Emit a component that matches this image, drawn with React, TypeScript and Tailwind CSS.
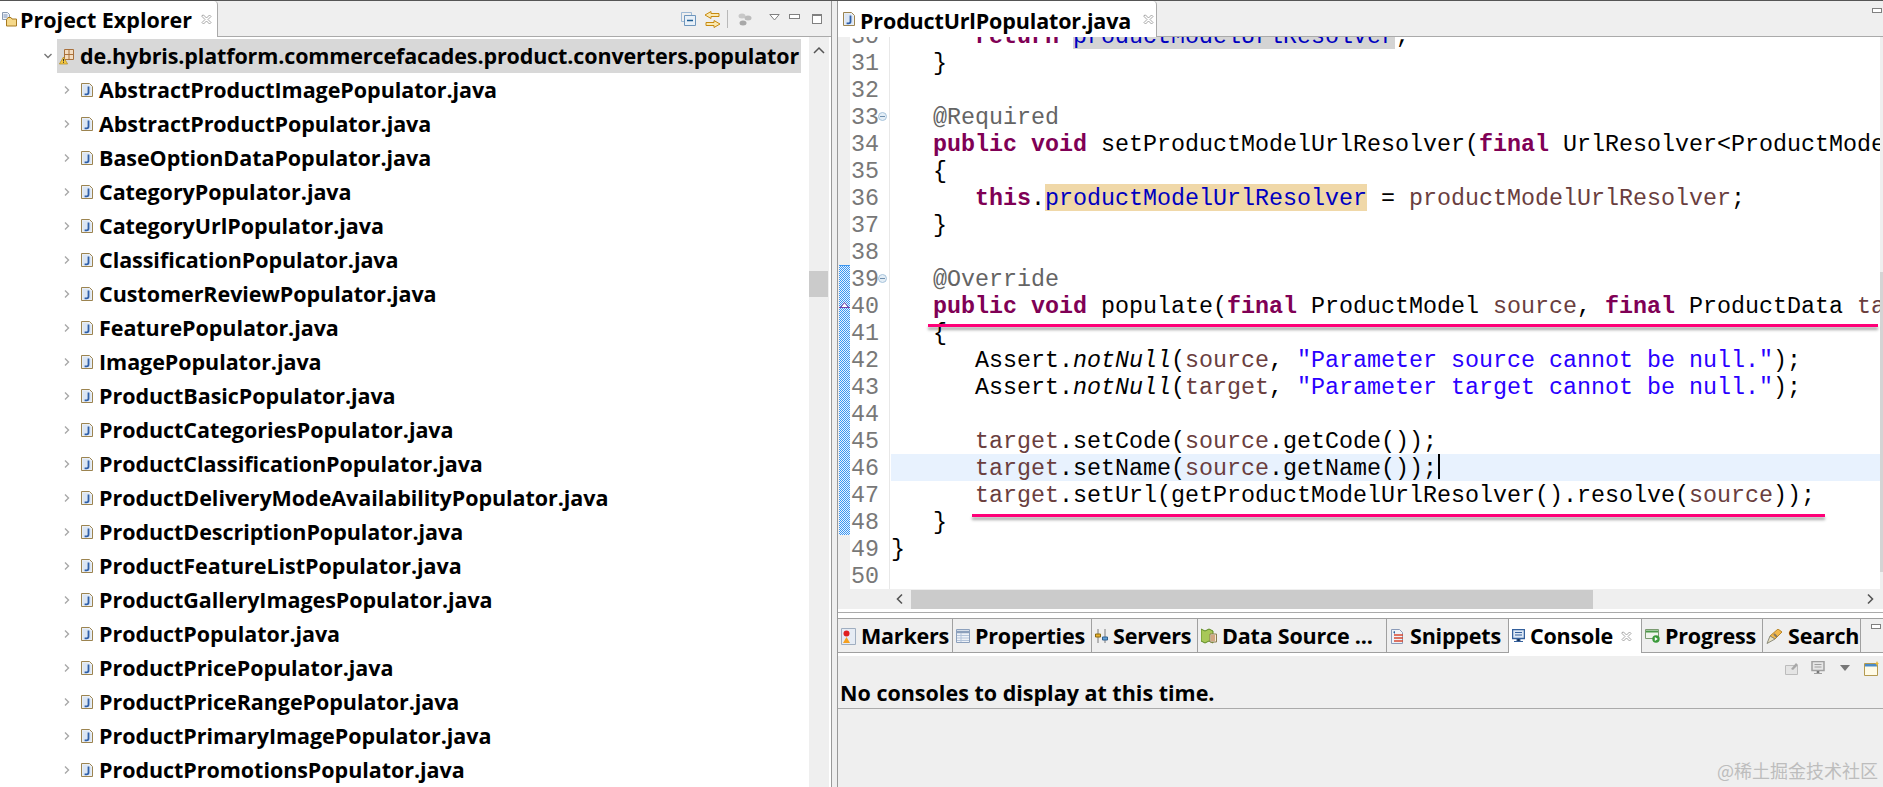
import type { ReactNode } from "react";

type Kind = "p" | "k" | "f" | "s" | "v" | "a" | "i";
type Tok = [string, Kind] | [string, Kind, string];

const files = [
  "AbstractProductImagePopulator.java",
  "AbstractProductPopulator.java",
  "BaseOptionDataPopulator.java",
  "CategoryPopulator.java",
  "CategoryUrlPopulator.java",
  "ClassificationPopulator.java",
  "CustomerReviewPopulator.java",
  "FeaturePopulator.java",
  "ImagePopulator.java",
  "ProductBasicPopulator.java",
  "ProductCategoriesPopulator.java",
  "ProductClassificationPopulator.java",
  "ProductDeliveryModeAvailabilityPopulator.java",
  "ProductDescriptionPopulator.java",
  "ProductFeatureListPopulator.java",
  "ProductGalleryImagesPopulator.java",
  "ProductPopulator.java",
  "ProductPricePopulator.java",
  "ProductPriceRangePopulator.java",
  "ProductPrimaryImagePopulator.java",
  "ProductPromotionsPopulator.java",
];

const kindClass: Record<Kind, string> = {
  p: "text-black",
  k: "text-[#7f0055] font-bold",
  f: "text-[#0000c0]",
  s: "text-[#2a00ff]",
  v: "text-[#6a3e3e]",
  a: "text-[#646464]",
  i: "text-black italic",
};

const code: Tok[][] = [
  [["      ", "p"], ["return", "k"], [" ", "p"], ["productModelUrlResolver", "f", "bg-[#d4d4d4]"], [";", "p"]],
  [["   }", "p"]],
  [],
  [["   @Required", "a"]],
  [["   ", "p"], ["public", "k"], [" ", "p"], ["void", "k"], [" setProductModelUrlResolver(", "p"], ["final", "k"], [" UrlResolver<ProductModel> ", "p"], ["productModelUrlResolver", "v"], [")", "p"]],
  [["   {", "p"]],
  [["      ", "p"], ["this", "k"], [".", "p"], ["productModelUrlResolver", "f", "bg-[#f0d8a8]"], [" = ", "p"], ["productModelUrlResolver", "v"], [";", "p"]],
  [["   }", "p"]],
  [],
  [["   @Override", "a"]],
  [["   ", "p"], ["public", "k"], [" ", "p"], ["void", "k"], [" populate(", "p"], ["final", "k"], [" ProductModel ", "p"], ["source", "v"], [", ", "p"], ["final", "k"], [" ProductData ", "p"], ["target", "v"], [")", "p"]],
  [["   {", "p"]],
  [["      Assert.", "p"], ["notNull", "i"], ["(", "p"], ["source", "v"], [", ", "p"], ["\"Parameter source cannot be null.\"", "s"], [");", "p"]],
  [["      Assert.", "p"], ["notNull", "i"], ["(", "p"], ["target", "v"], [", ", "p"], ["\"Parameter target cannot be null.\"", "s"], [");", "p"]],
  [],
  [["      ", "p"], ["target", "v"], [".setCode(", "p"], ["source", "v"], [".getCode());", "p"]],
  [["      ", "p"], ["target", "v"], [".setName(", "p"], ["source", "v"], [".getName());", "p"]],
  [["      ", "p"], ["target", "v"], [".setUrl(getProductModelUrlResolver().resolve(", "p"], ["source", "v"], ["));", "p"]],
  [["   }", "p"]],
  [["}", "p"]],
  [],
];

function JavaIcon() {
  return (
    <svg width="12" height="14" viewBox="0 0 12 14" className="shrink-0">
      <path d="M.5.5h8l3 3v10H.5z" fill="#e8eef6" stroke="#9c8450" />
      <path d="M2 2h6v2h2v8H2z" fill="#dbe6f4" />
      <path d="M7.5 3.5v6q0 1.8-1.8 1.8H3.6" fill="none" stroke="#2f5fa8" strokeWidth="1.8" />
    </svg>
  );
}

function PackageIcon() {
  return (
    <svg width="16" height="17" viewBox="0 0 16 17" className="shrink-0">
      <path d="M5.5 1.5h9v10h-9z" fill="#f3dcc0" stroke="#a8703c" />
      <path d="M10 1.5v10M5.5 6.5h9" stroke="#a8703c" />
      <path d="M4.5 9 8.6 16H.4z" fill="#f5c842" stroke="#b08a20" strokeWidth=".7" />
      <path d="M4.5 11v2.4M4.5 14.2v.8" stroke="#333" />
    </svg>
  );
}

function ProjectIcon() {
  return (
    <svg width="15" height="15" viewBox="0 0 15 15" className="shrink-0">
      <path d="M.5.5h5l2 2v5h-7z" fill="#eef2f8" stroke="#8a9ab0" />
      <path d="M1.5 3h4M1.5 5h4" stroke="#7d93b8" />
      <path d="M4.5 7.5 6 5.5h3l1 1.500h4.500v7h-10z" fill="#f6d98a" stroke="#a87a20" />
    </svg>
  );
}

function CloseIcon() {
  return (
    <svg width="11" height="11" viewBox="0 0 11 11" className="shrink-0">
      <path d="M1 1.500 2.500 1 5.500 4 8.500 1 10 2.500 7 5.500 10 8.500 8.500 10 5.500 7 2.500 10 1 8.500 4 5.500 1 2.500z" fill="#fff" stroke="#8f8f8f" strokeWidth=".8" />
    </svg>
  );
}

function Chevron({ down }: { down?: boolean }) {
  return (
    <svg width="10" height="10" viewBox="0 0 10 10" className="shrink-0">
      <path d={down ? "M1.500 3 5 6.500 8.500 3" : "M3 1.500 6.500 5 3 8.500"} fill="none" stroke={down ? "#777" : "#a8a8a8"} strokeWidth="1.400" />
    </svg>
  );
}

function MinIcon() {
  return <div className="h-[5px] w-[10px] border border-[#808080] bg-white" />;
}

function TopTools() {
  return (
    <div className="ml-auto flex items-center pr-[9px] pt-[1px]">
      <svg width="15" height="14" viewBox="0 0 15 14">
        <path d="M.5.500h10v3M.5.500v9h3" fill="none" stroke="#9db8d4" />
        <path d="M3.500 3.500h11v10h-11z" fill="#e8f0f8" stroke="#6f96bc" />
        <path d="M6 8.500h6" stroke="#1f5f94" strokeWidth="1.500" />
      </svg>
      <svg width="17" height="17" viewBox="0 0 17 17" className="ml-[8px]">
        <path d="M7 .500 1 4l6 3.500V5.500h8v-3H7zM10 9.500 16 13l-6 3.500v-2H2v-3h8z" fill="#fbe9b0" stroke="#c78a10" />
      </svg>
      <div className="ml-[6px] h-[18px] w-px bg-[#b8b8b8]" />
      <svg width="14" height="14" viewBox="0 0 14 14" className="ml-[10px]">
        <ellipse cx="4" cy="4" rx="3.500" ry="2.500" fill="#c8c8c8" />
        <ellipse cx="10" cy="6" rx="3.500" ry="2.500" fill="#bcbcbc" />
        <ellipse cx="5" cy="11" rx="3.500" ry="2.500" fill="#a8a8a8" />
      </svg>
      <svg width="11" height="7" viewBox="0 0 11 7" className="ml-[17px] mb-[4px]">
        <path d="M.8.500h9.400L5.500 6z" fill="#fff" stroke="#808080" />
      </svg>
      <div className="ml-[9px] mb-[5px] h-[5px] w-[11px] border border-[#808080] bg-white" />
      <div className="ml-[12px] mb-[1px] h-[10px] w-[10px] border border-[#808080] border-t-[2px] bg-white" />
    </div>
  );
}

function CodeLine({ n, toks }: { n: number; toks: Tok[] }) {
  const current = n === 46;
  return (
    <div className="flex h-[27px]">
      <div className="relative w-[40px] shrink-0 border-r border-[#e8e8e8] pl-[1px] text-[#787878]">
        {n}
        {(n === 33 || n === 39) && (
          <div className="absolute left-[28px] top-[9px] h-[9px] w-[9px] rounded-full border border-[#a8c4dc] bg-[#e4eef6]">
            <div className="mx-auto mt-[3px] h-px w-[5px] bg-[#6f8fae]" />
          </div>
        )}
      </div>
      <div className={`ml-[1px] grow whitespace-pre ${current ? "bg-[#e8f2fe]" : ""}`}>
        {toks.map((t, i) => (
          <span key={i} className={`inline-block h-[27px] align-top ${kindClass[t[1]]} ${t[2] ?? ""}`}>
            {t[0]}
          </span>
        ))}
        {current && <span className="ml-px inline-block h-[25px] w-[2px] bg-black align-top" />}
      </div>
    </div>
  );
}

const bottomTabs: { label: string; w: string; icon: ReactNode; active?: boolean }[] = [
  {
    label: "Markers",
    w: "w-[115px]",
    icon: (
      <svg width="15" height="17" viewBox="0 0 15 17">
        <path d="M.5.500h14v16H.5z" fill="#e6ecf4" stroke="#a0aec0" />
        <circle cx="5.500" cy="5.500" r="3" fill="#e02020" />
        <path d="M5.500 9 9 15H2z" fill="#f5a020" />
      </svg>
    ),
  },
  {
    label: "Properties",
    w: "w-[139px]",
    icon: (
      <svg width="14" height="14" viewBox="0 0 14 14">
        <path d="M.5.500h13v13H.5z" fill="#eef2f8" stroke="#8ca0bc" />
        <path d="M1 3h12" stroke="#8ca0bc" strokeWidth="2.500" />
        <path d="M1 6.500h12M1 9h12M1 11.500h12M5 4v9" stroke="#b4c4da" />
      </svg>
    ),
  },
  {
    label: "Servers",
    w: "w-[106px]",
    icon: (
      <svg width="13" height="14" viewBox="0 0 13 14">
        <path d="M3 0v14M10 0v14" stroke="#7a7a7a" />
        <path d="M.5 5h5v3h-5z" fill="#e8b030" stroke="#8a6a10" />
        <path d="M7.500 8h5v3h-5z" fill="#60a0d8" stroke="#306090" />
      </svg>
    ),
  },
  {
    label: "Data Source ...",
    w: "w-[189px]",
    icon: (
      <svg width="16" height="16" viewBox="0 0 16 16">
        <path d="M0 1l4 2 4-2 4 2v12l-4-2-4 2-4-2z" fill="#a8c858" stroke="#5c8a20" />
        <path d="M9 6h6.500v8H9z" fill="#f4ecd4" stroke="#8a7a50" />
        <path d="M10 8h4M10 10h4M10 12h4" stroke="#b06030" />
      </svg>
    ),
  },
  {
    label: "Snippets",
    w: "w-[122px]",
    icon: (
      <svg width="15" height="15" viewBox="0 0 15 15">
        <path d="M1.500.500h8l3 3v11h-11z" fill="#eef2f8" stroke="#8a9ab8" />
        <path d="M4 6h9M4 9h9M4 12h9" stroke="#d84830" strokeWidth="1.300" />
        <path d="M3 3l2-1v3z" fill="#306098" />
      </svg>
    ),
  },
  {
    label: "Console",
    w: "w-[133px]",
    active: true,
    icon: (
      <svg width="13" height="14" viewBox="0 0 13 14">
        <path d="M.5.500h12v9H.5z" fill="#dce8f6" stroke="#34609c" strokeWidth="1.500" />
        <path d="M3 3.500h7M3 6h7" stroke="#34609c" />
        <path d="M5 10h3v2H5zM2 12.500h9" stroke="#34609c" />
      </svg>
    ),
  },
  {
    label: "Progress",
    w: "w-[121px]",
    icon: (
      <svg width="15" height="14" viewBox="0 0 15 14">
        <path d="M.5.500h13v9H.5z" fill="#f0f4ec" stroke="#7a9a70" />
        <path d="M1 1.500h12v2H1z" fill="#4a9a48" />
        <circle cx="11" cy="10" r="3.700" fill="#3a9a3a" />
        <path d="M9.800 8v4l3-2z" fill="#fff" />
      </svg>
    ),
  },
  {
    label: "Search",
    w: "w-[98px]",
    icon: (
      <svg width="17" height="15" viewBox="0 0 17 15">
        <path d="M12 0l4 3-7 7-5-3z" fill="#f2b84a" stroke="#b8862a" />
        <path d="M4 7l5 3-8 4.500z" fill="#e8e0c0" stroke="#8c8c7c" />
        <path d="M8 5l3 3" stroke="#8a7a60" strokeWidth="2" />
      </svg>
    ),
  },
];

export default function App() {
  return (
    <div className="relative flex h-[787px] w-[1883px] overflow-hidden border-t border-[#555] bg-white font-['Open_Sans',sans-serif] text-black">
      {/* project explorer */}
      <div className="flex w-[831px] shrink-0 flex-col">
        <div className="flex h-[36px] shrink-0 border-b border-[#aaa] bg-[#efefef]">
          <div className="-mb-px flex h-[36px] w-[218px] shrink-0 items-center rounded-tr border-r border-[#aaa] bg-white pl-[2px]">
            <ProjectIcon />
            <span className="ml-[3px] pt-[2px] text-[21.5px] font-bold leading-none">Project Explorer</span>
            <span className="ml-[9px]"><CloseIcon /></span>
          </div>
          <TopTools />
        </div>
        <div className="flex min-h-0 grow">
          <div className="w-[809px] shrink-0 pt-[2px]">
            <div className="flex h-[34px] items-center">
              <div className="ml-[43px] w-[14px]"><Chevron down /></div>
              <div className="flex h-[34px] w-[744px] items-center bg-[#d8d8d8] pl-[2px]">
                <PackageIcon />
                <span className="ml-[5px] text-[21.5px] font-bold tracking-[-0.13px]">de.hybris.platform.commercefacades.product.converters.populator</span>
              </div>
            </div>
            {files.map((f) => (
              <div key={f} className="flex h-[34px] items-center pl-[62px]">
                <div className="w-[19px]"><Chevron /></div>
                <JavaIcon />
                <span className="ml-[6px] text-[21.5px] font-bold tracking-[-0.05px]">{f}</span>
              </div>
            ))}
          </div>
          <div className="flex w-[20px] shrink-0 flex-col bg-[#efefef]">
            <svg width="20" height="10" viewBox="0 0 20 10" className="mt-[9px]">
              <path d="M5 7l5-5 5 5" fill="none" stroke="#555" strokeWidth="1.500" />
            </svg>
            <div className="mt-[215px] h-[26px] w-[19px] bg-[#cbcbcb]" />
          </div>
        </div>
      </div>

      <div className="w-px shrink-0 bg-[#999]" />
      <div className="w-[5px] shrink-0 bg-[#efefef]" />

      <div className="flex min-w-0 grow flex-col border-l border-[#999]">
        {/* editor */}
        <div className="flex h-[36px] shrink-0 border-b border-[#aaa] bg-[#efefef]">
          <div className="-mb-px flex h-[36px] w-[319px] shrink-0 items-center rounded-tr border-r border-[#aaa] bg-white pl-[5px]">
            <JavaIcon />
            <span className="ml-[5px] pt-[3px] text-[21.5px] font-bold leading-none tracking-[-0.15px]">ProductUrlPopulator.java</span>
            <span className="ml-[12px]"><CloseIcon /></span>
          </div>
          <div className="ml-auto pr-[1px] pt-[7px]"><MinIcon /></div>
        </div>
        <div className="flex h-[552px] shrink-0 bg-[#efefef]">
          <div className="relative w-[12px] shrink-0">
            <div className="absolute left-[1px] top-[228px] h-[270px] w-[11px] border-t border-[#3c96f0] bg-[#b3d7fa] bg-[repeating-conic-gradient(#3c96f0_0_25%,#e8f3ff_0_50%)] bg-[length:2px_2px]" />
            <svg width="11" height="7" viewBox="0 0 11 7" className="absolute left-[1px] top-[264px]">
              <path d="M0 6.500h11M2 6 5.500 1.500 9 6" fill="#fff" stroke="#7040a8" />
            </svg>
          </div>
          <div className="min-w-0 grow overflow-hidden bg-white font-['Liberation_Mono',monospace] text-[23.33px] leading-[31px]">
            <div className="-mt-[15px]">
              {code.map((toks, i) => (
                <CodeLine key={i} n={30 + i} toks={toks} />
              ))}
            </div>
          </div>
          <div className="w-[3px] shrink-0 pt-[235px]">
            <div className="h-[300px] bg-[#d4d4d4]" />
          </div>
        </div>
        <div className="flex h-[20px] shrink-0 items-center bg-[#efefef] pr-[8px]">
          <svg width="10" height="12" viewBox="0 0 10 12" className="ml-[57px]">
            <path d="M7 1.500 2.500 6 7 10.500" fill="none" stroke="#555" strokeWidth="1.600" />
          </svg>
          <div className="ml-[6px] h-[19px] w-[682px] bg-[#cbcbcb]" />
          <svg width="10" height="12" viewBox="0 0 10 12" className="ml-auto">
            <path d="M3 1.500 7.500 6 3 10.500" fill="none" stroke="#555" strokeWidth="1.600" />
          </svg>
        </div>
        <div className="h-[3px] shrink-0" />
        <div className="h-[1px] shrink-0 bg-[#aaa]" />
        <div className="h-[5px] shrink-0 bg-white" />

        {/* bottom views */}
        <div className="flex h-[35px] shrink-0 border-y border-[#a0a0a0] bg-[#efefef]">
          {bottomTabs.map((t) => (
            <div
              key={t.label}
              className={`-mb-px flex h-[34px] shrink-0 items-center gap-[5px] border-r border-[#a0a0a0] pl-[3px] ${t.w} ${t.active ? "bg-white" : ""}`}
            >
              {t.icon}
              <span className="text-[21.5px] font-bold leading-none tracking-[-0.2px]">{t.label}</span>
              {t.active && <span className="ml-[3px]"><CloseIcon /></span>}
            </div>
          ))}
          <div className="ml-auto pr-[2px] pt-[5px]"><MinIcon /></div>
        </div>
        <div className="h-[3px] shrink-0 bg-white" />
        <div className="flex h-[53px] shrink-0 flex-col border-b border-[#aaa] bg-[#efefef] pl-[2px]">
          <div className="flex h-[24px] items-center justify-end gap-[10px] pr-[4px]">
            <svg width="14" height="13" viewBox="0 0 14 13">
              <path d="M.5 3.500h12v9H.5z" fill="#e4e4e4" stroke="#bcbcbc" />
              <path d="M6 7l5-6 2 2-5 5z" fill="#a8a8a8" />
            </svg>
            <svg width="14" height="14" viewBox="0 0 14 14" className="ml-[2px]">
              <path d="M1 .500h12v9H1z" fill="#e6e6e6" stroke="#a0a0a0" strokeWidth="1.500" />
              <path d="M3.500 3.500h7M3.500 6h7M6 10h2v2H6zM3 12.500h8" stroke="#a0a0a0" />
            </svg>
            <svg width="10" height="6" viewBox="0 0 10 6" className="ml-[5px]">
              <path d="M0 0h10L5 6z" fill="#777" />
            </svg>
            <svg width="15" height="15" viewBox="0 0 15 15" className="ml-[4px]">
              <path d="M.5 2.500h13v12H.5z" fill="#fffbe8" stroke="#b49a50" />
              <path d="M1 3h12v2.500H1z" fill="#4a8ac8" />
              <path d="M13 0l1 2 1 .5-1 .5-1 2-1-2-1-.5 1-.5z" fill="#e8b838" />
            </svg>
          </div>
          <div className="-mt-px text-[21.5px] font-bold leading-[28px]">No consoles to display at this time.</div>
        </div>
        <div className="grow bg-[#efefef]" />
      </div>

      {/* red annotation lines drawn over the code */}
      <div className="absolute left-[928px] top-[323px] h-[3px] w-[950px] bg-[#ff0078] shadow-[0_3px_3px_rgba(0,0,0,0.35)]" />
      <div className="absolute left-[972px] top-[513px] h-[3px] w-[853px] bg-[#ff0078] shadow-[0_3px_3px_rgba(0,0,0,0.35)]" />
      <div className="absolute left-[1717px] top-[756px] font-['Noto_Sans_CJK_SC',sans-serif] text-[18px] leading-[26px] text-[#bdbdbd]">
        @稀土掘金技术社区
      </div>
    </div>
  );
}
